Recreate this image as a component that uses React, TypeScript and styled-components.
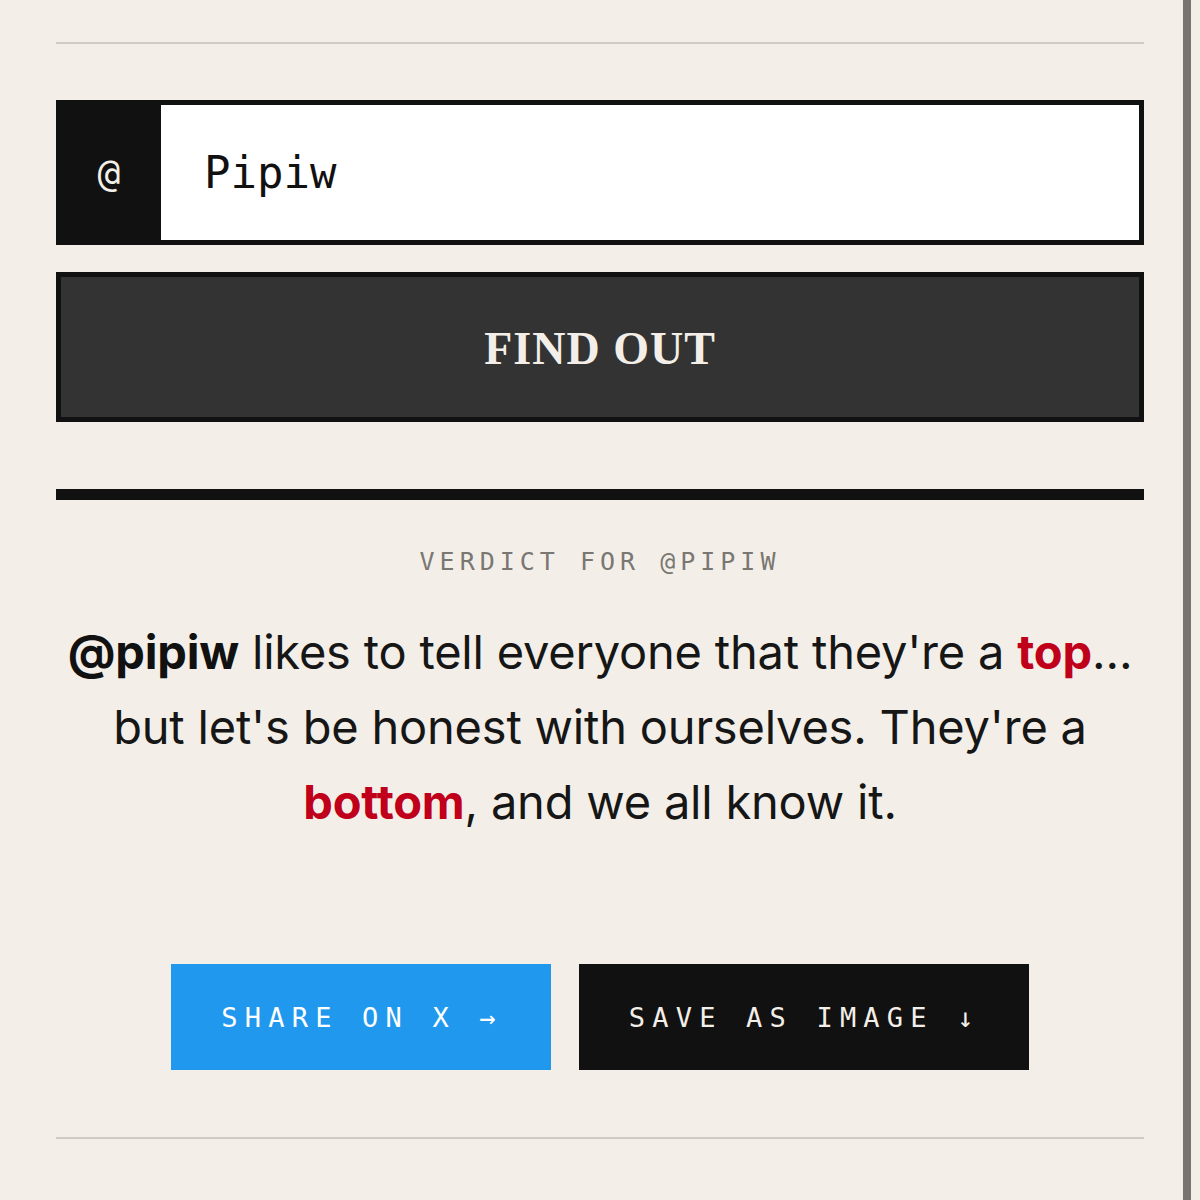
import React from "react";
import styled, { createGlobalStyle } from "styled-components";

const GlobalStyle = createGlobalStyle`
  html, body { margin: 0; padding: 0; background: #f3efe8; }
  * { box-sizing: border-box; }
`;

const Page = styled.div`
  display: flex;
  min-height: 1200px;
  width: 1200px;
  background: #f3efe8;
`;

const Main = styled.main`
  flex: 0 0 1183px;
  padding: 42px 39px 0 56px;
  display: flex;
  flex-direction: column;
`;

const Rail = styled.div`
  flex: 0 0 8px;
  background: #78746f;
`;

const Divider = styled.hr<{ $gap: number }>`
  border: none;
  height: 2px;
  background: #cfcbc5;
  margin: 0;
  margin-top: ${(p) => p.$gap}px;
`;

const InputRow = styled.div`
  margin-top: 56px;
  display: flex;
  height: 145px;
  border: 5px solid #111;
  background: #fff;
`;

const AtCell = styled.div`
  flex: 0 0 100px;
  background: #111;
  color: #f3efe8;
  display: flex;
  align-items: center;
  justify-content: center;
  font-family: "DejaVu Sans Mono", monospace;
  font-size: 38px;
  padding-right: 4px;
`;

const HandleInput = styled.input`
  flex: 1;
  border: none;
  outline: none;
  background: #fff;
  padding: 0 0 0 43px;
  font-family: "DejaVu Sans Mono", monospace;
  font-size: 44px;
  color: #111;
`;

const FindButton = styled.button`
  margin-top: 27px;
  height: 150px;
  border: 5px solid #111;
  background: #333;
  color: #f3efe8;
  font-family: "Liberation Serif", "DejaVu Serif", serif;
  font-weight: 700;
  font-size: 46px;
  letter-spacing: 1px;
  padding-top: 4px;
  cursor: pointer;
`;

const ThickRule = styled.div`
  margin-top: 67px;
  height: 11px;
  background: #111;
`;

const Label = styled.div`
  margin-top: 47px;
  text-align: center;
  font-family: "DejaVu Sans Mono", monospace;
  font-size: 25px;
  line-height: 30px;
  letter-spacing: 5px;
  color: #7a7772;
`;

const Verdict = styled.p`
  margin: 37px 0 0;
  text-align: center;
  font-family: Inter, "Noto Sans", sans-serif;
  font-size: 47px;
  line-height: 75px;
  color: #161616;
  letter-spacing: -0.2px;
`;

const Handle = styled.strong`
  font-weight: 700;
  color: #111;
`;

const Hot = styled.strong`
  font-weight: 700;
  color: #c0001a;
`;

const Actions = styled.div`
  margin-top: 125px;
  display: flex;
  justify-content: center;
  gap: 28px;
`;

const ActionButton = styled.button<{ $variant: "x" | "dark" }>`
  height: 106px;
  padding: 0 48px 0 50px;
  border: none;
  background: ${(p) => (p.$variant === "x" ? "#1f98ee" : "#111")};
  color: ${(p) => (p.$variant === "x" ? "#fff" : "#f3efe8")};
  font-family: "DejaVu Sans Mono", monospace;
  font-size: 27px;
  letter-spacing: 7.2px;
  cursor: pointer;
`;

export default function App() {
  return (
    <Page>
      <GlobalStyle />
      <Main>
        <Divider $gap={0} />
        <InputRow>
          <AtCell>@</AtCell>
          <HandleInput defaultValue="Pipiw" />
        </InputRow>
        <FindButton>FIND OUT</FindButton>
        <ThickRule />
        <Label>VERDICT FOR @PIPIW</Label>
        <Verdict>
          <Handle>@pipiw</Handle> likes to tell everyone that they're a <Hot>top</Hot>…
          <br />
          but let's be honest with ourselves. They're a
          <br />
          <Hot>bottom</Hot>, and we all know it.
        </Verdict>
        <Actions>
          <ActionButton $variant="x">SHARE ON X →</ActionButton>
          <ActionButton $variant="dark">SAVE AS IMAGE ↓</ActionButton>
        </Actions>
        <Divider $gap={67} />
      </Main>
      <Rail />
    </Page>
  );
}
